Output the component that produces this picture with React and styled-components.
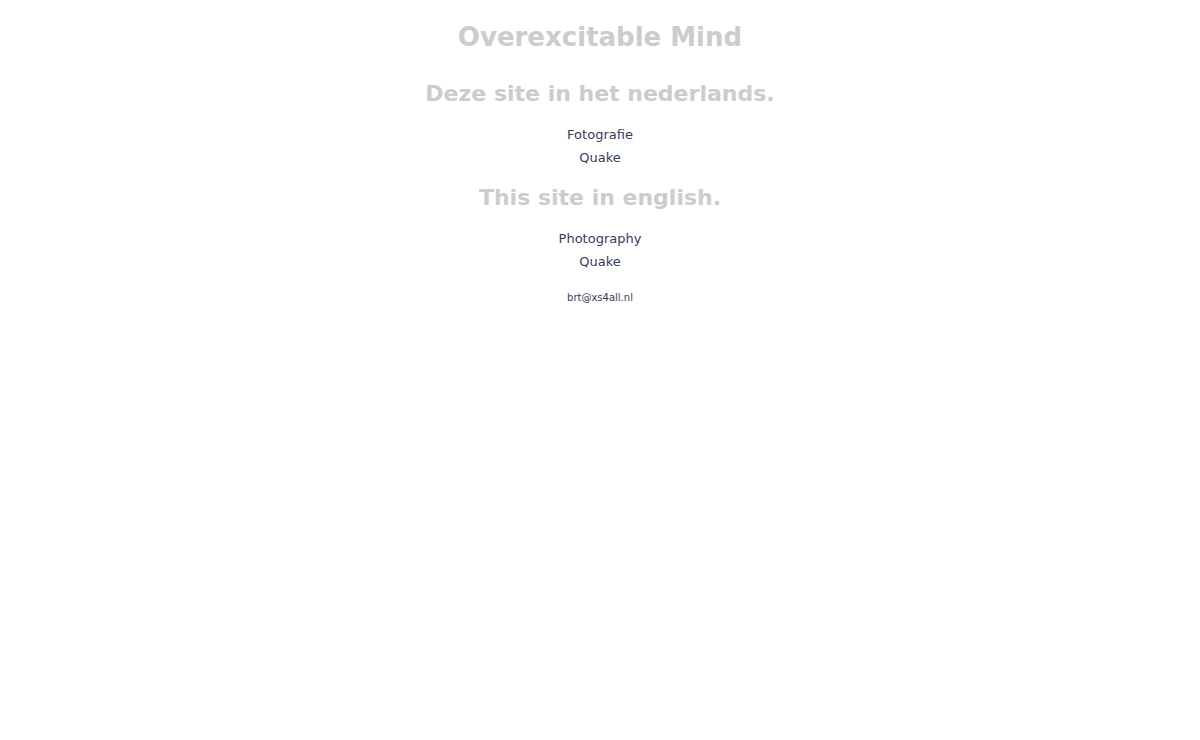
import React from "react";
import styled, { createGlobalStyle } from "styled-components";

const GlobalStyle = createGlobalStyle`
  body {
    margin: 0;
    background: #ffffff;
    font-family: "DejaVu Sans", Verdana, sans-serif;
  }
`;

const Page = styled.div`
  display: flex;
  flex-direction: column;
  align-items: center;
  padding-top: 20px;
  text-align: center;
`;

const Title = styled.h1`
  margin: 0;
  font-size: 26px;
  line-height: 34px;
  font-weight: 700;
  color: #cccccc;
`;

const Heading = styled.h2`
  margin: ${(p) => p.$top}px 0 15px;
  font-size: 22px;
  line-height: 28px;
  font-weight: 700;
  color: #cccccc;
`;

const LinkList = styled.div`
  display: flex;
  flex-direction: column;
  align-items: center;
`;

const NavLink = styled.a`
  font-size: 13px;
  line-height: 23px;
  color: #3a3a5a;
  text-decoration: none;
`;

const Mail = styled.a`
  margin-top: 18px;
  font-size: 10px;
  line-height: 14px;
  color: #3a3a5a;
  text-decoration: none;
`;

export default function App() {
  return (
    <>
      <GlobalStyle />
      <Page>
        <Title>Overexcitable Mind</Title>
        <Heading $top={26}>Deze site in het nederlands.</Heading>
        <LinkList>
          <NavLink href="#">Fotografie</NavLink>
          <NavLink href="#">Quake</NavLink>
        </LinkList>
        <Heading $top={15}>This site in english.</Heading>
        <LinkList>
          <NavLink href="#">Photography</NavLink>
          <NavLink href="#">Quake</NavLink>
        </LinkList>
        <Mail href="#">brt@xs4all.nl</Mail>
      </Page>
    </>
  );
}
